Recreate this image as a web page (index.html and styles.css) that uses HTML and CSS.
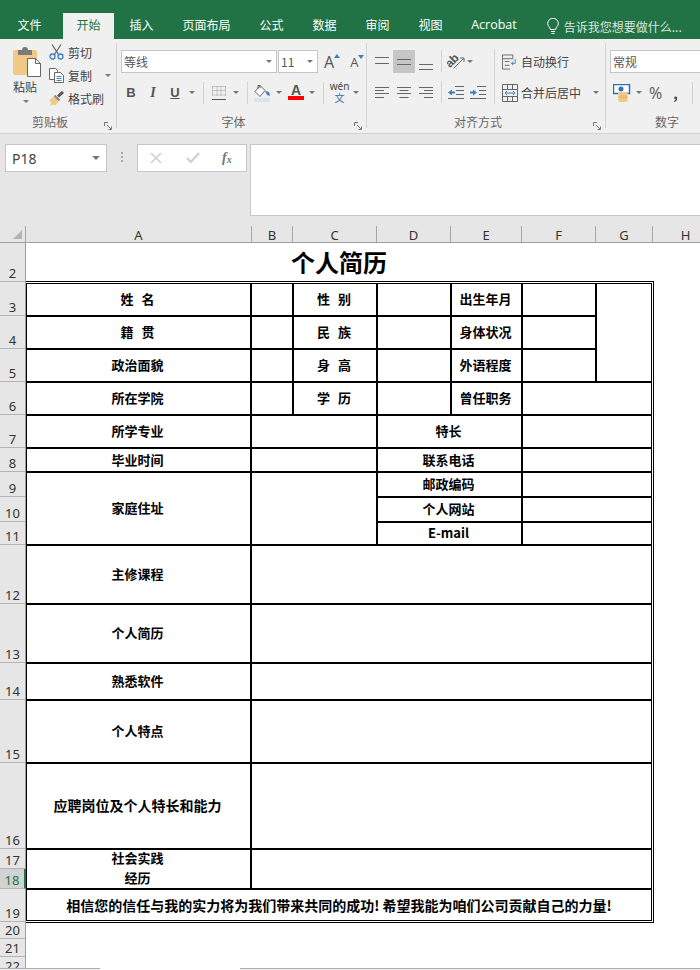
FILE: index.html
```html
<!DOCTYPE html>
<html lang="zh-CN">
<head>
  <meta charset="UTF-8" />
  <meta name="viewport" content="width=device-width, initial-scale=1.0"/>
  <title>个人简历 - Excel</title>
  <link rel="stylesheet" href="styles.css">
</head>
<body>
  <svg class="defs">
    <symbol id="launcher" viewBox="0 0 8 8">
      <path d="M.5 4V.5H4M3 3l4 4M4.5 7.5h3v-3" fill="none" stroke="#777"/>
    </symbol>
  </svg>

  <nav class="tabs">
    <span class="tab tab-first">文件</span>
    <span class="tab active">开始</span>
    <span class="tab">插入</span>
    <span class="tab">页面布局</span>
    <span class="tab">公式</span>
    <span class="tab">数据</span>
    <span class="tab">审阅</span>
    <span class="tab">视图</span>
    <span class="tab tab-latin">Acrobat</span>
    <span class="tell">
      <svg width="12" height="17" viewBox="0 0 12 17"><path d="M3.5 11.5C3 9 .7 8.300.7 5.500a5.300 5.300 0 0 1 10.600 0c0 2.800-2.300 3.500-2.800 6zM4 13.500h4M4.500 15.500h3" fill="none" stroke="#fff"/></svg>
      告诉我您想要做什么...
    </span>
  </nav>

  <div class="ribbon">
    <section class="group group-clip">
      <div class="clip-body">
        <div class="paste">
          <svg width="28" height="30" viewBox="0 0 28 30">
            <path d="M2 3h20a2 2 0 0 1 2 2v23H2a2 2 0 0 1-2-2V5a2 2 0 0 1 2-2z" fill="#f0c987"/>
            <path d="M5 3h4a3 3 0 0 1 6 0h4v5H5z" fill="#7a7a7a"/>
            <path d="M14.500 11.500h8l5 5v13h-13z" fill="#fff" stroke="#666"/>
            <path d="M22.500 11.500v5h5" fill="none" stroke="#666"/>
          </svg>
          <span class="paste-label">粘贴</span>
          <i class="caret"></i>
        </div>
        <div class="clip-list">
          <div class="clip-item">
            <svg width="15" height="16" viewBox="0 0 15 16"><path d="M3 .5l6.500 10M12 .5L5.500 10.500" fill="none" stroke="#666" stroke-width="1.300"/><circle cx="3.500" cy="12.500" r="2.500" fill="none" stroke="#3f7fbf" stroke-width="1.300"/><circle cx="11.500" cy="12.500" r="2.500" fill="none" stroke="#3f7fbf" stroke-width="1.300"/></svg>
            剪切
          </div>
          <div class="clip-item">
            <svg width="15" height="15" viewBox="0 0 15 15"><path d="M.5.500h6l2 2v9h-8z" fill="#fff" stroke="#666"/><path d="M5.500 4.500h6l3 3v7h-9z" fill="#fff" stroke="#666"/><path d="M7.500 8.500h5M7.500 10.500h5M7.500 12.500h5" stroke="#3f7fbf"/></svg>
            复制
            <i class="caret caret-copy"></i>
          </div>
          <div class="clip-item">
            <svg width="15" height="15" viewBox="0 0 15 15"><path d="M0 9.500l6-5 4.500 4.500-4 5.500-2-1-4 1.500 2-3z" fill="#f0c987"/><path d="M5.500 4.500l5 5" stroke="#8a8a8a" stroke-width="2"/><path d="M9 5.500l5-4.500" stroke="#555" stroke-width="3"/></svg>
            格式刷
          </div>
        </div>
      </div>
      <div class="group-label"><span></span><span>剪贴板</span><svg class="launcher"><use href="#launcher"/></svg></div>
    </section>

    <section class="group group-font">
      <div class="font-top">
        <div class="combo combo-font">等线<i class="caret"></i></div>
        <div class="combo combo-size">11<i class="caret"></i></div>
        <div class="grow-font">A<svg width="6" height="4" viewBox="0 0 6 4"><path d="M0 4l3-4 3 4z" fill="#3f7fbf"/></svg></div>
        <div class="shrink-font">A<svg width="6" height="4" viewBox="0 0 6 4"><path d="M0 0l3 4 3-4z" fill="#3f7fbf"/></svg></div>
      </div>
      <div class="font-tools">
        <b class="tool-text">B</b>
        <i class="tool-text tool-serif">I</i>
        <u class="tool-text">U</u>
        <span class="slot"><i class="caret"></i></span>
        <span class="slot"><i class="sep"></i></span>
        <span class="slot">
          <svg width="14" height="14" viewBox="0 0 14 14"><path d="M.5.500h13M.5 4.500h13M.5 9h13M.5.500v9M5 .5v9M9 .5v9M13.500.500v9" fill="none" stroke="#999" stroke-dasharray="1 1"/><path d="M0 13.500h14" stroke="#555"/></svg>
        </span>
        <span class="slot"><i class="caret"></i></span>
        <span class="slot"><i class="sep"></i></span>
        <span class="slot">
          <svg width="17" height="18" viewBox="0 0 17 18"><path d="M0 14h16v4H0z" fill="#d5e4f1"/><path d="M6 1.500l5 5-5 6-5-5z" fill="#fff" stroke="#666"/><path d="M4 5V1.500h2V4" fill="none" stroke="#666"/><path d="M11 7l4 1 1 4-3-1z" fill="#3f7fbf"/></svg>
        </span>
        <span class="slot"><i class="caret"></i></span>
        <span class="font-color">A</span>
        <span class="slot"><i class="caret"></i></span>
        <span class="slot"><i class="sep"></i></span>
        <span class="phonetic"><span class="wen">wén</span><span class="wen-char">文</span></span>
        <span class="slot"><i class="caret"></i></span>
      </div>
      <div class="group-label"><span></span><span>字体</span><svg class="launcher"><use href="#launcher"/></svg></div>
    </section>

    <section class="group group-align">
      <div class="align-body">
        <div class="align-left">
          <div class="align-row">
            <span class="slot"><svg width="14" height="10" viewBox="0 0 14 10"><path d="M0 .5h14M0 6.500h14" stroke="#666"/></svg></span>
            <span class="slot slot-on"><svg width="14" height="8" viewBox="0 0 14 8"><path d="M0 1.500h14M0 6.500h14" stroke="#666"/></svg></span>
            <span class="slot slot-low"><svg width="14" height="8" viewBox="0 0 14 8"><path d="M0 1.500h14M0 6.500h14" stroke="#666"/></svg></span>
            <span class="slot-sep"><i class="sep"></i></span>
            <span class="slot">
              <svg width="18" height="18" viewBox="0 0 18 18"><path d="M6.500 15.500l10-10M13 5h4v4" fill="none" stroke="#666"/><text x="-1" y="12" font-size="12" fill="#555" transform="rotate(-45 5 9)" class="orient-text">ab</text></svg>
            </span>
            <span class="slot slot-small"><i class="caret"></i></span>
          </div>
          <div class="align-row">
            <span class="slot"><svg width="14" height="11" viewBox="0 0 14 11"><path d="M0 .5h14M0 3.500h9M0 6.500h14M0 10.500h9" stroke="#666"/></svg></span>
            <span class="slot"><svg width="14" height="11" viewBox="0 0 14 11"><path d="M0 .5h14M2.500 3.500h9M0 6.500h14M2.500 10.500h9" stroke="#666"/></svg></span>
            <span class="slot"><svg width="14" height="11" viewBox="0 0 14 11"><path d="M0 .5h14M5 3.500h9M0 6.500h14M5 10.500h9" stroke="#666"/></svg></span>
            <span class="slot-sep"><i class="sep"></i></span>
            <span class="slot"><svg width="16" height="13" viewBox="0 0 16 13"><path d="M7 .5h9M8 4.500h8M8 8.500h8M0 12.500h16" stroke="#666"/><path d="M0 6.500l4-3v2h3v2H4v2z" fill="#3f7fbf"/></svg></span>
            <span class="slot"><svg width="16" height="13" viewBox="0 0 16 13"><path d="M7 .5h9M9 4.500h7M9 8.500h7M0 12.500h16" stroke="#666"/><path d="M7 6.500l-4-3v2H0v2h3v2z" fill="#3f7fbf"/></svg></span>
          </div>
        </div>
        <i class="sep sep-tall"></i>
        <div class="align-right">
          <div class="wrap-row">
            <svg width="16" height="16" viewBox="0 0 17 16"><path d="M.5.500h11v4H.5zM.5 4.500v11h8M3 7.500h5M3 11.500h5" fill="none" stroke="#666"/><path d="M14 5v4.500h-4M12 7.500l-2 2 2 2" fill="none" stroke="#3f7fbf"/></svg>
            自动换行
          </div>
          <div class="wrap-row">
            <svg width="16" height="18" viewBox="0 0 16 18"><path d="M.5.500h15v17H.5zM.5 5.500h15M.5 12.500h15M5.500.500v5M10.500.500v5M5.500 12.500v5M10.500 12.500v5" fill="none" stroke="#666"/><path d="M3 9h10" stroke="#3f7fbf"/><path d="M5 7L3 9l2 2M11 7l2 2-2 2" fill="none" stroke="#3f7fbf"/></svg>
            合并后居中
            <i class="caret caret-merge"></i>
          </div>
        </div>
      </div>
      <div class="group-label"><span></span><span>对齐方式</span><svg class="launcher"><use href="#launcher"/></svg></div>
    </section>

    <section class="group group-number">
      <div class="combo combo-format">常规</div>
      <div class="number-tools">
        <svg width="18" height="18" viewBox="0 0 18 18"><path d="M.5.500h16v9H.5z" fill="#fff" stroke="#2f6fb0" stroke-width="1.500"/><circle cx="8" cy="5" r="2.500" fill="#2f6fb0"/><ellipse cx="10" cy="10" rx="5" ry="2" fill="#f0c987"/><ellipse cx="10" cy="13" rx="5" ry="2" fill="#eebb6a"/><ellipse cx="10" cy="16" rx="5" ry="2" fill="#f0c987"/></svg>
        <i class="caret caret-money"></i>
        <span class="percent">%</span>
        <b class="comma">,</b>
        <i class="sep sep-number"></i>
      </div>
      <div class="group-label"><span></span><span>数字</span><span></span></div>
    </section>
  </div>

  <div class="formula">
    <div class="namebox">P18<i class="caret"></i></div>
    <div class="grip"></div>
    <div class="fxbox">
      <svg width="12" height="12" viewBox="0 0 12 12"><path d="M1 1l10 10M11 1L1 11" stroke="#cfcfcf" stroke-width="1.600"/></svg>
      <svg width="14" height="12" viewBox="0 0 14 12"><path d="M1 6l4 4 8-9" fill="none" stroke="#cfcfcf" stroke-width="2.200"/></svg>
      <span class="fx">f<sub>x</sub></span>
    </div>
    <div class="formula-input"></div>
  </div>

  <div class="colheads">
    <div class="corner"><svg width="9" height="9" viewBox="0 0 9 9"><path d="M9 0v9H0z" fill="#b4b4b4"/></svg></div>
    <div class="col col-a">A</div>
    <div class="col col-b">B</div>
    <div class="col col-c">C</div>
    <div class="col col-d">D</div>
    <div class="col col-e">E</div>
    <div class="col col-f">F</div>
    <div class="col col-g">G</div>
    <div class="col col-h">H</div>
  </div>

  <main class="sheet">
    <div class="rowheads">
      <div class="rowhead r2">2</div>
      <div class="rowhead r3">3</div>
      <div class="rowhead r4">4</div>
      <div class="rowhead r4">5</div>
      <div class="rowhead r4">6</div>
      <div class="rowhead r4">7</div>
      <div class="rowhead r8">8</div>
      <div class="rowhead r9">9</div>
      <div class="rowhead r9">10</div>
      <div class="rowhead r11">11</div>
      <div class="rowhead r12">12</div>
      <div class="rowhead r12">13</div>
      <div class="rowhead r14">14</div>
      <div class="rowhead r15">15</div>
      <div class="rowhead r16">16</div>
      <div class="rowhead r17">17</div>
      <div class="rowhead r17 selected">18</div>
      <div class="rowhead r19">19</div>
      <div class="rowhead r20">20</div>
      <div class="rowhead r21">21</div>
      <div class="rowhead r21">22</div>
    </div>

    <div class="cells">
      <h1 class="title">个人简历</h1>
      <div class="resume">
        <div class="cell spaced">姓 名</div><div class="cell"></div><div class="cell spaced">性 别</div><div class="cell"></div><div class="cell">出生年月</div><div class="cell"></div><div class="cell photo last"></div>
        <div class="cell spaced">籍 贯</div><div class="cell"></div><div class="cell spaced">民 族</div><div class="cell"></div><div class="cell">身体状况</div><div class="cell"></div>
        <div class="cell">政治面貌</div><div class="cell"></div><div class="cell spaced">身 高</div><div class="cell"></div><div class="cell">外语程度</div><div class="cell"></div>
        <div class="cell">所在学院</div><div class="cell"></div><div class="cell spaced">学 历</div><div class="cell"></div><div class="cell">曾任职务</div><div class="cell span2 last"></div>

        <div class="cell">所学专业</div><div class="cell span2"></div><div class="cell span2">特长</div><div class="cell span2 last"></div>
        <div class="cell">毕业时间</div><div class="cell span2"></div><div class="cell span2">联系电话</div><div class="cell span2 last"></div>
        <div class="cell tall3">家庭住址</div><div class="cell span2 tall3"></div><div class="cell span2">邮政编码</div><div class="cell span2 last"></div>
        <div class="cell span2">个人网站</div><div class="cell span2 last"></div>
        <div class="cell span2">E-mail</div><div class="cell span2 last"></div>

        <div class="cell">主修课程</div><div class="cell span6 last"></div>
        <div class="cell">个人简历</div><div class="cell span6 last"></div>
        <div class="cell">熟悉软件</div><div class="cell span6 last"></div>
        <div class="cell">个人特点</div><div class="cell span6 last"></div>
        <div class="cell big">应聘岗位及个人特长和能力</div><div class="cell span6 last"></div>
        <div class="cell tall2 practice">社会实践<br>经历</div><div class="cell span6 tall2 last"></div>
        <div class="cell span7 big closing">相信您的信任与我的实力将为我们带来共同的成功! 希望我能为咱们公司贡献自己的力量!</div>
      </div>
    </div>
  </main>

  <footer class="sheetbar">
    <div class="bar-tabs"></div>
    <div class="bar-gap"></div>
    <div class="bar-scroll"></div>
  </footer>
</body>
</html>
```

FILE: styles.css
```css
:root {
  --green: #217346;
  --ribbon: #f0f0f0;
  --chrome: #e6e6e6;
  --line: #c6c6c6;
  --ink: #444444;
  --head-line: #a6a6a6;
}

* {
  box-sizing: border-box;
}

html, body {
  margin: 0;
  height: 970px;
  overflow: hidden;
}

body {
  display: flex;
  flex-direction: column;
  font-family: "Noto Sans CJK SC", "Noto Sans", sans-serif;
  font-size: 12px;
  color: var(--ink);
  background-color: #fff;
}

.defs {
  position: absolute;
  width: 0;
  height: 0;
}

/* tabs */
.tabs {
  display: flex;
  align-items: flex-end;
  height: 39px;
  flex: none;
  padding-left: 4px;
  background-color: var(--green);
  color: #fff;
  white-space: nowrap;
}

.tab {
  height: 26px;
  line-height: 24px;
  padding: 0 13.5px;
  margin-right: 2px;
}

.tab-first {
  margin-right: 8px;
}

.tab.active {
  background-color: var(--ribbon);
  color: var(--green);
}

.tab-latin {
  font-family: "Open Sans", sans-serif;
  font-size: 12.5px;
  padding: 0 13px;
}

.tell {
  display: flex;
  align-items: center;
  gap: 5px;
  height: 26px;
  margin-left: 15px;
  color: #d8e6dd;
}

/* ribbon */
.ribbon {
  display: flex;
  height: 95px;
  flex: none;
  padding-top: 4px;
  background-color: var(--ribbon);
  border-bottom: 1px solid #d2d2d2;
  overflow: hidden;
}

.group {
  display: flex;
  flex-direction: column;
  height: 85px;
  flex: none;
  border-right: 1px solid #d2d2d2;
}

.group-clip { width: 117px; }
.group-font { width: 250px; }
.group-align { width: 239px; }
.group-number { width: 122px; border-right: none; }

.group-label {
  display: grid;
  grid-template-columns: 1fr auto 1fr;
  align-items: center;
  height: 16px;
  margin-top: auto;
  margin-bottom: -1px;
  padding-right: 16px;
  color: #666;
  text-align: center;
}

.group-number .group-label {
  padding-right: 0;
}

.launcher {
  justify-self: end;
  width: 8px;
  height: 8px;
  margin: 8px -12px 0 0;
}

.caret {
  display: inline-block;
  width: 0;
  height: 0;
  border: 3px solid transparent;
  border-top: 3px solid #777;
  border-bottom: none;
  flex: none;
}

.slot {
  display: flex;
  align-items: center;
  justify-content: center;
  height: 23px;
}

.sep {
  display: block;
  width: 1px;
  height: 22px;
  background-color: #d2d2d2;
}

/* clipboard */
.clip-body {
  display: flex;
  padding-left: 13px;
}

.paste {
  display: flex;
  flex-direction: column;
  width: 28px;
  padding-top: 4px;
}

.paste-label {
  line-height: 16px;
  margin-top: 2px;
}

.paste .caret {
  margin: 5px 0 0 10px;
}

.clip-list {
  display: flex;
  flex-direction: column;
  gap: 3px;
  margin: -1px 0 0 8px;
}

.clip-item {
  display: flex;
  align-items: center;
  gap: 4px;
  height: 20px;
}

.caret-copy {
  margin-left: 9px;
}

/* font */
.font-top {
  display: flex;
  align-items: center;
  gap: 1px;
  padding: 7px 0 0 4px;
}

.combo {
  display: flex;
  align-items: center;
  justify-content: space-between;
  height: 23px;
  padding: 0 4px 0 2px;
  background-color: #fff;
  border: 1px solid var(--line);
  color: #555;
}

.combo-font { width: 156px; }
.combo-size { width: 40px; }

.grow-font, .shrink-font {
  display: flex;
  font-family: "Open Sans", sans-serif;
  color: #555;
}

.grow-font {
  margin-left: 5px;
  font-size: 16px;
}

.shrink-font {
  margin-left: 9px;
  font-size: 13px;
  line-height: 20px;
}

.grow-font svg, .shrink-font svg {
  margin-top: 3px;
}

.font-tools {
  display: grid;
  grid-template-columns: 22px 22px 22px 12px 10px 22px 11px 12px 18px 15px 20px 12px 10px 23px 9px;
  margin: 8px 0 0 3px;
}

.tool-text {
  height: 23px;
  line-height: 23px;
  text-align: center;
  font-family: "Liberation Sans", sans-serif;
  font-size: 13px;
  font-weight: 700;
  color: #555;
}

.tool-serif {
  font-family: "Liberation Serif", serif;
  font-size: 14px;
}

.font-color {
  height: 16px;
  margin: 3px 2px 0;
  border-bottom: 4px solid #ff0000;
  line-height: 12px;
  text-align: center;
  font-family: "Liberation Sans", sans-serif;
  font-size: 14px;
  font-weight: 700;
  color: #555;
}

.phonetic {
  display: flex;
  flex-direction: column;
  align-items: center;
  height: 23px;
  line-height: 11px;
}

.wen {
  font-size: 10px;
  font-family: "Noto Sans", sans-serif;
}

.wen-char {
  font-size: 10px;
  color: #2f6fb0;
}

/* alignment */
.align-body {
  display: flex;
  padding: 6px 0 0 4px;
}

.align-left {
  display: flex;
  flex-direction: column;
  gap: 8px;
  width: 123px;
  padding-top: 1px;
}

.align-row {
  display: grid;
  grid-template-columns: 22px 22px 22px 8px 22px 22px;
  height: 23px;
}

.slot-on {
  background-color: #c6c6c6;
}

.slot-low {
  padding-top: 10px;
}

.slot-small {
  justify-content: flex-start;
}

.slot-sep {
  display: flex;
  justify-content: center;
}

.orient-text {
  font-family: "Liberation Sans", sans-serif;
  font-weight: 700;
}

.sep-tall {
  height: 55px;
}

.align-right {
  display: flex;
  flex-direction: column;
  gap: 8px;
  padding: 1px 0 0 7px;
}

.wrap-row {
  display: flex;
  align-items: center;
  gap: 3px;
  height: 23px;
}

.caret-merge {
  margin-left: 9px;
}

/* number */
.group-number .combo-format {
  width: 110px;
  margin: 7px 0 0 4px;
  justify-content: flex-start;
}

.number-tools {
  display: flex;
  align-items: center;
  height: 23px;
  margin-top: 8px;
  padding-left: 7px;
}

.caret-money {
  margin-left: 5px;
}

.percent {
  margin-left: 7px;
  font-family: "Open Sans", sans-serif;
  font-size: 16px;
  color: #555;
}

.comma {
  margin-left: 11px;
  font-size: 14px;
  line-height: 18px;
}

.sep-number {
  margin-left: 14px;
}

/* formula bar */
.formula {
  display: flex;
  align-items: flex-start;
  height: 92px;
  flex: none;
  padding: 10px 0 0 5px;
  background-color: var(--chrome);
}

.namebox, .fxbox, .formula-input {
  background-color: #fff;
  border: 1px solid var(--line);
}

.namebox {
  display: flex;
  align-items: center;
  justify-content: space-between;
  width: 102px;
  height: 28px;
  padding: 0 6px;
  font-family: "Noto Sans", sans-serif;
  font-size: 14px;
}

.namebox .caret {
  border-width: 4px;
  border-top-width: 4px;
}

.grip {
  width: 2px;
  height: 11px;
  margin: 8px 14px 0;
  background-image: linear-gradient(#aaa 2px, transparent 2px);
  background-size: 2px 4px;
}

.fxbox {
  display: flex;
  align-items: center;
  width: 110px;
  height: 28px;
  padding-left: 12px;
  gap: 24px;
}

.fx {
  margin-left: -2px;
  font-family: "Liberation Serif", serif;
  font-style: italic;
  font-weight: 700;
  font-size: 14px;
  color: #777;
}

.fx sub {
  font-size: 10px;
  line-height: 0;
  vertical-align: -1px;
}

.formula-input {
  flex: 1;
  height: 72px;
  margin-left: 3px;
  border-right: none;
}

/* sheet headers */
.colheads {
  display: flex;
  height: 17px;
  flex: none;
  background-color: var(--chrome);
  border-bottom: 1px solid #9e9e9e;
  font-family: "Noto Sans", sans-serif;
  font-size: 13px;
  line-height: 18px;
  color: #333;
  overflow: hidden;
}

.corner {
  display: flex;
  width: 26px;
  flex: none;
  padding: 4px 0 0 13px;
  border-right: 1px solid var(--head-line);
}

.col {
  flex: none;
  text-align: center;
  border-right: 1px solid var(--head-line);
}

.col-a { width: 226px; }
.col-b { width: 41px; }
.col-c { width: 84px; }
.col-d { width: 74px; }
.col-e { width: 71px; }
.col-f { width: 74px; }
.col-g { width: 57px; }
.col-h { width: 65px; border-right: none; }

.sheet {
  display: flex;
  height: 725px;
  flex: none;
  overflow: hidden;
}

.rowheads {
  width: 26px;
  flex: none;
  background-color: var(--chrome);
  border-right: 1px solid #9e9e9e;
  font-family: "Noto Sans", sans-serif;
  font-size: 13px;
  color: #333;
}

.rowhead {
  display: flex;
  align-items: flex-end;
  justify-content: center;
  line-height: 16px;
  border-bottom: 1px solid #b4b4b4;
}

.r2 { height: 39px; }
.r3 { height: 34px; }
.r4 { height: 33px; }
.r8 { height: 24px; }
.r9 { height: 25px; }
.r11 { height: 23px; }
.r12 { height: 59px; }
.r14 { height: 37px; }
.r15 { height: 63px; }
.r16 { height: 86px; }
.r17 { height: 20px; }
.r19 { height: 33px; }
.r20 { height: 17px; }
.r21 { height: 18px; }

.rowhead.selected {
  margin-right: -1px;
  background-color: #d2d2d2;
  border-right: 2px solid var(--green);
  color: var(--green);
}

/* resume table */
.cells {
  width: 628px;
  flex: none;
  color: #000;
  font-weight: 700;
  font-size: 13px;
}

.title {
  height: 38px;
  margin: 0;
  padding-right: 2px;
  font-size: 24px;
  line-height: 38px;
  text-align: center;
}

.resume {
  display: grid;
  grid-template-columns: 225px 42px 84px 74px 71px 74px 54px;
  grid-template-rows: 33px 33px 33px 33px 33px 24px 25px 25px 23px 59px 59px 37px 63px 86px 20px 20px 30px;
  border: 3px double #000;
  border-left: 1px solid #000;
}

.cell {
  display: flex;
  align-items: center;
  justify-content: center;
  padding: 0 2px 2px 0;
  text-align: center;
  border-right: 2px solid #000;
  border-bottom: 2px solid #000;
}

.cell.last {
  border-right: none;
}

.spaced {
  word-spacing: 5px;
}

.big {
  font-size: 14px;
}

.practice {
  line-height: 20px;
}

.photo {
  grid-row: span 3;
  grid-column: 7;
}

.span2 { grid-column: span 2; }
.span6 { grid-column: span 6; }
.span7 { grid-column: span 7; }
.tall2 { grid-row: span 2; }
.tall3 { grid-row: span 3; }

.closing {
  padding: 0;
  border: none;
}

/* bottom strip */
.sheetbar {
  display: flex;
  height: 2px;
  flex: none;
}

.bar-tabs {
  width: 100px;
  background-color: var(--ribbon);
  border-top: 1px solid #aaa;
}

.bar-gap {
  width: 140px;
}

.bar-scroll {
  flex: 1;
  background-color: var(--ribbon);
  border-top: 1px solid #aaa;
}
```
